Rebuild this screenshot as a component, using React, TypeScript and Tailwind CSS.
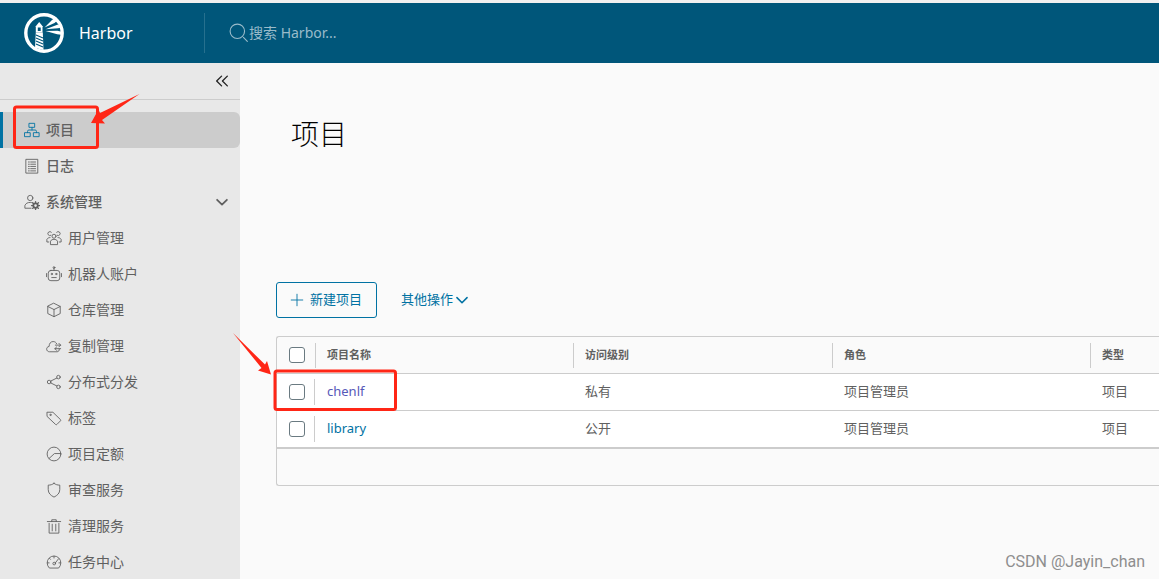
import type { ReactNode } from 'react';

interface IconProps {
  className?: string;
  strokeWidth?: number;
  children: ReactNode;
}

function Icon({ className = 'size-4', strokeWidth = 2, children }: IconProps) {
  return (
    <svg
      viewBox="0 0 36 36"
      className={`${className} shrink-0`}
      fill="none"
      stroke="currentColor"
      strokeWidth={strokeWidth}
      strokeLinejoin="round"
      strokeLinecap="round"
      aria-hidden="true"
    >
      {children}
    </svg>
  );
}

const icons = {
  organization: (
    <>
      <rect x="12" y="3" width="12" height="9" />
      <rect x="2" y="24" width="12" height="9" />
      <rect x="22" y="24" width="12" height="9" />
      <path d="M18 12v6M8 24v-3a3 3 0 0 1 3-3h14a3 3 0 0 1 3 3v3" />
    </>
  ),
  log: (
    <>
      <rect x="5" y="3" width="26" height="31" />
      <path d="M10 9h2M10 14h2M10 19h2M10 24h2M10 29h2M15 9h11M15 14h11M15 19h11M15 24h11M15 29h11" />
    </>
  ),
  admin: (
    <>
      <circle cx="14" cy="9" r="6" />
      <path d="M16 32H2v-6c2-5 6-7 12-7 2 0 3 0 5 1" />
      <circle cx="26" cy="26" r="5" strokeWidth="4" />
      <path d="M26 17v3M26 32v3M17 26h3M32 26h3M19.600 19.600l2 2M30.400 30.400l2 2M32.400 19.600l-2 2M21.600 30.400l-2 2" strokeWidth="3" />
    </>
  ),
  users: (
    <>
      <circle cx="18" cy="14" r="4.500" />
      <path d="M10 32v-7c2-3 5-4 8-4s6 1 8 4v7z" />
      <path d="M11 12a4.500 4.500 0 1 1 1-7M25 12a4.500 4.500 0 1 0-1-7M9 17c-3 0-5 1-7 4v6h4M27 17c3 0 5 1 7 4v6h-4" />
    </>
  ),
  robot: (
    <>
      <path d="M11 10h14a6 6 0 0 1 6 6v11a6 6 0 0 1-6 6H11a6 6 0 0 1-6-6V16a6 6 0 0 1 6-6zM18 10V5M1 17v7M35 17v7" />
      <circle cx="18" cy="3.500" r="2" />
      <path d="M13 26h10" />
      <circle cx="13" cy="18" r="1.500" />
      <circle cx="23" cy="18" r="1.500" />
    </>
  ),
  cube: <path d="M18 3l14 7v16l-14 7-14-7V10zM4 10l14 7 14-7M18 17v16" />,
  replication: (
    <>
      <path d="M30 25c0 4-2 6-5 6H8c-8 0-9-11-1-12 0-6 3-11 9-11 4 0 7 2 8 5" />
      <path d="M21 16h12M29 12l4 4-4 4M33 24H20M24 20l-4 4 4 4" />
    </>
  ),
  share: (
    <>
      <circle cx="7" cy="18" r="4" />
      <circle cx="28" cy="7" r="4" />
      <circle cx="28" cy="29" r="4" />
      <path d="M10.500 16L24.500 9M10.500 20l14 7" />
    </>
  ),
  tag: (
    <>
      <path d="M3 5h12.500l17 16.500c1 1 1 2 0 3l-8 8c-1 1-2 1-3 0L3 15z" />
      <circle cx="10" cy="11" r="1.500" />
    </>
  ),
  quota: (
    <>
      <circle cx="18" cy="18" r="15.500" />
      <path d="M33 17H19L7 28" />
    </>
  ),
  shield: <path d="M18 3c4 3 8 4 13 4v10c0 8-5 13-13 17C10 30 5 25 5 17V7c5 0 9-1 13-4z" />,
  trash: <path d="M3 8h30M13 8V4h10v4M7 12v22h22V12M14 14v15M22 14v15" />,
  gauge: (
    <>
      <path d="M7 31a15.500 15.500 0 1 1 22 0zM18 5v4M3 20h4M33 20h-4M8 10l2 2M21 20l7-9" />
      <circle cx="18.500" cy="21.500" r="3" />
    </>
  ),
  chevronDown: <path d="M5 12l13 13 13-13" />,
};

const systemItems = [
  { label: '用户管理', icon: icons.users },
  { label: '机器人账户', icon: icons.robot },
  { label: '仓库管理', icon: icons.cube },
  { label: '复制管理', icon: icons.replication },
  { label: '分布式分发', icon: icons.share },
  { label: '标签', icon: icons.tag },
  { label: '项目定额', icon: icons.quota },
  { label: '审查服务', icon: icons.shield },
  { label: '清理服务', icon: icons.trash },
  { label: '任务中心', icon: icons.gauge },
];

const projects = [
  { name: 'chenlf', access: '私有', role: '项目管理员', type: '项目', visited: true },
  { name: 'library', access: '公开', role: '项目管理员', type: '项目', visited: false },
];

function Logo() {
  return (
    <svg viewBox="0 0 40 40" className="size-10 shrink-0" aria-hidden="true">
      <circle cx="20" cy="20" r="18.200" fill="none" stroke="#fff" strokeWidth="3.400" />
      <path d="M15.200 9l4 5h-.7v5.500h-6.700V14h-.6z" fill="#fff" />
      <path d="M13.800 14.500h2.900v3.500h-2.900z" fill="#00567a" />
      <path d="M11.800 19.500h7l.7 17.500-8.500-2z" fill="#fff" />
      <path d="M12 22l7 3M12 25l7 3M12 28l7 3M12 31l7 3" stroke="#00567a" strokeWidth="1.100" />
      <path d="M20.500 14.500L28 7l4-3 2 3-3.500 3zM21.500 16.300L34 11.500l3.500 3-3.500.8zM21.500 18l12-.2 4 1-.3 3-4-.6z" fill="#fff" />
    </svg>
  );
}

function Header() {
  return (
    <header className="flex h-[63px] items-center border-t-3 border-[#f0f0f0] bg-[#00567a] text-white">
      <a href="#" className="flex h-10 w-[205px] items-center gap-[15px] border-r border-[#26708e] pl-6">
        <Logo />
        <span className="text-base">Harbor</span>
      </a>
      <div className="flex flex-1 items-center pl-6 text-[#99bbca]">
        <Icon className="size-5">
          <circle cx="15" cy="15" r="13" />
          <path d="M26 26l7 7" />
        </Icon>
        <input
          type="search"
          aria-label="搜索"
          placeholder="搜索 Harbor..."
          className="w-full bg-transparent text-sm outline-none placeholder:text-[#99bbca]"
        />
      </div>
    </header>
  );
}

function Sidebar() {
  return (
    <aside className="w-60 shrink-0 bg-[#e8e8e8] text-sm text-[#606060]">
      <div className="flex h-[37px] items-center justify-end border-b border-[#ccc] pr-[10px]">
        <button type="button" aria-label="收起" className="text-[#222]">
          <Icon strokeWidth={3}>
            <path d="M17 7L6 18l11 11M30 7L19 18l11 11" />
          </Icon>
        </button>
      </div>
      <nav className="pt-3">
        <a
          href="#"
          className="flex h-9 items-center gap-[6px] rounded-r-md border-l-3 border-[#0072a3] bg-[#ccc] pl-[21px] font-medium"
        >
          <span className="text-[#0072a3]">
            <Icon>{icons.organization}</Icon>
          </span>
          项目
        </a>
        <a href="#" className="flex h-9 items-center gap-[6px] pl-6 font-medium">
          <Icon>{icons.log}</Icon>
          日志
        </a>
        <button type="button" className="flex h-9 w-full items-center gap-[6px] pr-[10px] pl-6 font-medium">
          <Icon>{icons.admin}</Icon>
          系统管理
          <Icon className="ml-auto size-4" strokeWidth={4}>
            <path d="M7 13l11 11 11-11" />
          </Icon>
        </button>
        <ul>
          {systemItems.map((item) => (
            <li key={item.label}>
              <a href="#" className="flex h-9 items-center gap-[6px] pl-[46px]">
                <Icon>{item.icon}</Icon>
                {item.label}
              </a>
            </li>
          ))}
        </ul>
      </nav>
    </aside>
  );
}

function Checkbox({ label }: { label: string }) {
  return (
    <input
      type="checkbox"
      aria-label={label}
      className="block size-4 appearance-none rounded-[3px] border border-[#6a7a81] bg-white checked:bg-[#0072a3]"
    />
  );
}

function ProjectTable() {
  return (
    <div className="mt-[18px] rounded-l-[3px] border border-r-0 border-[#ccc]">
      <table className="w-full table-fixed border-separate border-spacing-0 text-left text-[#606060]">
        <colgroup>
          <col className="w-[38px]" />
          <col className="w-[258px]" />
          <col className="w-[259px]" />
          <col className="w-[258px]" />
          <col />
        </colgroup>
        <thead>
          <tr className="h-[37px] text-[11px] leading-4">
            <th className="border-b border-[#ccc] p-0 pl-3">
              <Checkbox label="全选" />
            </th>
            {['项目名称', '访问级别', '角色', '类型'].map((title) => (
              <th key={title} className="border-b border-[#ccc] p-0 font-bold">
                <div className="flex h-[25px] items-center border-l border-[#ccc] pl-[11px]">{title}</div>
              </th>
            ))}
          </tr>
        </thead>
        <tbody className="bg-white text-[13px] leading-4">
          {projects.map((project) => (
            <tr key={project.name} className="h-[37px]">
              <td className="border-b border-[#ccc] p-0">
                <div className="flex h-[26px] items-center border-r border-[#ccc] pl-3">
                  <Checkbox label={project.name} />
                </div>
              </td>
              <td className="border-b border-[#ccc] p-0 pb-[2px] pl-3">
                <a href="#" className={project.visited ? 'text-[#5659b8]' : 'text-[#0072a3]'}>
                  {project.name}
                </a>
              </td>
              <td className="border-b border-[#ccc] p-0 pb-[2px] pl-3">{project.access}</td>
              <td className="border-b border-[#ccc] p-0 pb-[2px] pl-3">{project.role}</td>
              <td className="border-b border-[#ccc] p-0 pb-[2px] pl-3">{project.type}</td>
            </tr>
          ))}
        </tbody>
      </table>
      <div className="h-[37px] border-t border-[#ccc]" />
    </div>
  );
}

function Annotations() {
  return (
    <svg
      className="pointer-events-none absolute top-0 left-0 h-[420px] w-[420px]"
      viewBox="0 0 420 420"
      fill="none"
      aria-hidden="true"
    >
      <rect x="14.500" y="107" width="83" height="40.500" rx="2" stroke="#ff2616" strokeWidth="3" />
      <rect x="275" y="371" width="120.500" height="38.500" rx="2" stroke="#ff2616" strokeWidth="3" />
      <path d="M139.500 94L100 113l-1.500-3.500L91 123l14 .5-3-3.500z" fill="#ff2616" />
      <path d="M233 333l32 31.500 2-3.500 4 13.500-13-4 3.500-2.500z" fill="#ff2616" />
    </svg>
  );
}

export default function App() {
  return (
    <div
      lang="zh-CN"
      className="relative flex h-screen flex-col overflow-hidden bg-[#fafafa] font-['Noto_Sans','Noto_Sans_CJK_SC',sans-serif]"
    >
      <Header />
      <div className="flex min-h-0 flex-1">
        <Sidebar />
        <main className="min-w-0 flex-1 pl-9">
          <h1 className="pt-[51px] pl-[15px] text-[28px] leading-10 font-light text-black">项目</h1>
          <div className="mt-32 flex items-center gap-6 text-[13px] text-[#0072a3]">
            <button
              type="button"
              className="flex h-9 items-center gap-[5px] rounded-[3px] border border-[#0072a3] pr-[14px] pl-3"
            >
              <Icon>
                <path d="M18 5v26M5 18h26" />
              </Icon>
              新建项目
            </button>
            <button type="button" className="flex h-9 items-center gap-[2px]">
              其他操作
              <Icon className="size-[14px]" strokeWidth={4}>
                {icons.chevronDown}
              </Icon>
            </button>
          </div>
          <ProjectTable />
        </main>
      </div>
      <Annotations />
      <div className="absolute right-[14px] bottom-[7px] font-['Roboto',sans-serif] text-base leading-5 text-[#8e8e8e]">
        CSDN @Jayin_chan
      </div>
    </div>
  );
}
